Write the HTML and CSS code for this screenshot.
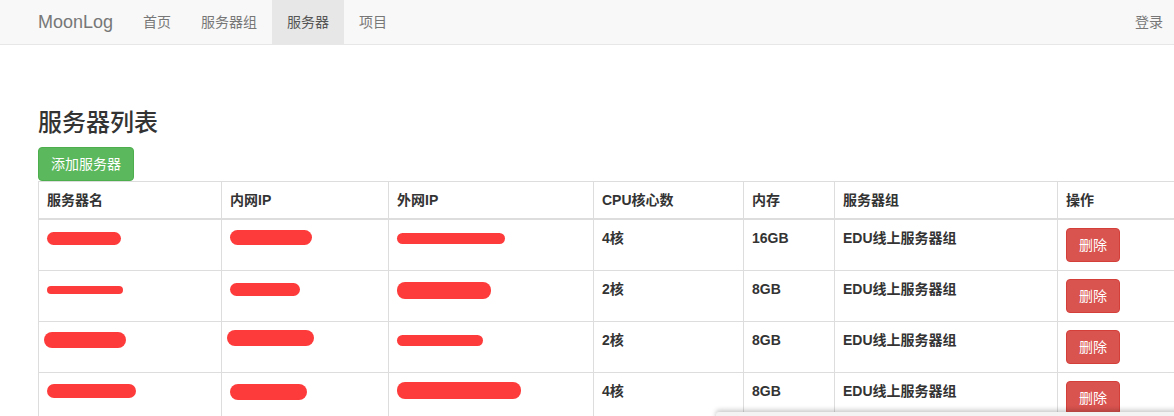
FILE: index.html
```html
<!DOCTYPE html>
<html lang="zh-CN">
<head>
<meta charset="utf-8">
<title>MoonLog - 服务器列表</title>
<link rel="stylesheet" href="styles.css">
</head>
<body>
<nav class="navbar">
  <div class="nav-left">
    <a class="brand" href="#">MoonLog</a>
    <ul class="nav">
      <li><a href="#">首页</a></li>
      <li><a href="#">服务器组</a></li>
      <li class="active"><a href="#">服务器</a></li>
      <li><a href="#">项目</a></li>
    </ul>
  </div>
  <ul class="nav nav-right">
    <li><a href="#">登录</a></li>
  </ul>
</nav>

<main class="main">
  <h3 class="title">服务器列表</h3>
  <button class="btn btn-success">添加服务器</button>
  <table class="table">
    <colgroup>
      <col class="c1"><col class="c2"><col class="c3"><col class="c4"><col class="c5"><col class="c6"><col class="c7">
    </colgroup>
    <thead>
      <tr><th>服务器名</th><th>内网IP</th><th>外网IP</th><th>CPU核心数</th><th>内存</th><th>服务器组</th><th>操作</th></tr>
    </thead>
    <tbody>
      <tr>
        <td><span class="redact" style="width:74px;height:13px;margin-top:4px"></span></td>
        <td><span class="redact" style="width:82px;height:15px;margin-top:2px"></span></td>
        <td><span class="redact" style="width:108px;height:11px;margin-top:5px"></span></td>
        <td>4核</td><td>16GB</td><td>EDU线上服务器组</td>
        <td><button class="btn btn-danger">删除</button></td>
      </tr>
      <tr>
        <td><span class="redact" style="width:76px;height:8px;margin-top:7px"></span></td>
        <td><span class="redact" style="width:70px;height:13px;margin-top:4px"></span></td>
        <td><span class="redact" style="width:94px;height:17px;margin-top:3px"></span></td>
        <td>2核</td><td>8GB</td><td>EDU线上服务器组</td>
        <td><button class="btn btn-danger">删除</button></td>
      </tr>
      <tr>
        <td class="shift"><span class="redact" style="width:82px;height:16px;margin-top:2px"></span></td>
        <td class="shift"><span class="redact" style="width:87px;height:16px;margin-top:0px"></span></td>
        <td><span class="redact" style="width:86px;height:11px;margin-top:5px"></span></td>
        <td>2核</td><td>8GB</td><td>EDU线上服务器组</td>
        <td><button class="btn btn-danger">删除</button></td>
      </tr>
      <tr>
        <td><span class="redact" style="width:89px;height:14px;margin-top:3px"></span></td>
        <td><span class="redact" style="width:77px;height:16px;margin-top:3px"></span></td>
        <td><span class="redact" style="width:124px;height:17px;margin-top:1px"></span></td>
        <td>4核</td><td>8GB</td><td>EDU线上服务器组</td>
        <td><button class="btn btn-danger">删除</button></td>
      </tr>
    </tbody>
  </table>
</main>
<div class="overlay-edge"></div>
</body>
</html>
```

FILE: styles.css
```css
html, body {
  margin: 0;
  padding: 0;
  overflow: hidden;
  background: #fff;
}
body {
  font-family: "Liberation Sans", Arial, "Noto Sans CJK SC", sans-serif;
  font-size: 14px;
  line-height: 20px;
  color: #333;
  position: relative;
  height: 416px;
}
a { text-decoration: none; }

.navbar {
  display: flex;
  justify-content: space-between;
  height: 44px;
  background: #f8f8f8;
  border-bottom: 1px solid #e7e7e7;
  padding: 0 0 0 23px;
}
.nav-left { display: flex; }
.brand {
  display: block;
  padding: 11px 15px;
  font-size: 18px;
  line-height: 22px;
  color: #777;
}
.nav {
  display: flex;
  list-style: none;
  margin: 0;
  padding: 0;
}
.nav li a {
  display: block;
  padding: 12px 15px;
  line-height: 20px;
  color: #777;
}
.nav-right li a {
  padding-right: 11px;
}
.nav li.active a {
  background: #e7e7e7;
  color: #555;
}

.main {
  padding: 65px 0 0 38px;
}
.title {
  margin: 0 0 11px;
  font-size: 24px;
  font-weight: 500;
  line-height: 26px;
  color: #333;
}
.btn {
  display: inline-block;
  font-family: inherit;
  font-size: 14px;
  line-height: 20px;
  padding: 6px 12px;
  border: 1px solid transparent;
  border-radius: 4px;
  color: #fff;
  cursor: pointer;
  vertical-align: middle;
}
.btn-success { background: #5cb85c; border-color: #4cae4c; }
.btn-danger { background: #d9534f; border-color: #d43f3a; }
.main > .btn { display: block; }

.table {
  border-collapse: collapse;
  table-layout: fixed;
  width: 1219px;
  border: 1px solid #ddd;
}
.c1 { width: 183px; }
.c2 { width: 167px; }
.c3 { width: 205px; }
.c4 { width: 150px; }
.c5 { width: 91px; }
.c6 { width: 223px; }
.c7 { width: 200px; }
.table th, .table td {
  border: 1px solid #ddd;
  padding: 8px;
  text-align: left;
  vertical-align: top;
  line-height: 20px;
  font-weight: bold;
}
.table thead th {
  border-bottom: 2px solid #ddd;
}
.table td.shift { padding-left: 5px; }
.redact {
  display: inline-block;
  background: #fd3b3b;
  border-radius: 8px;
  vertical-align: top;
}

.overlay-edge {
  position: absolute;
  left: 716px;
  top: 412px;
  width: 470px;
  height: 20px;
  background: #f3f3f3;
  box-shadow: 0 -2px 5px rgba(0, 0, 0, 0.22);
  border-top-left-radius: 3px;
}
```
